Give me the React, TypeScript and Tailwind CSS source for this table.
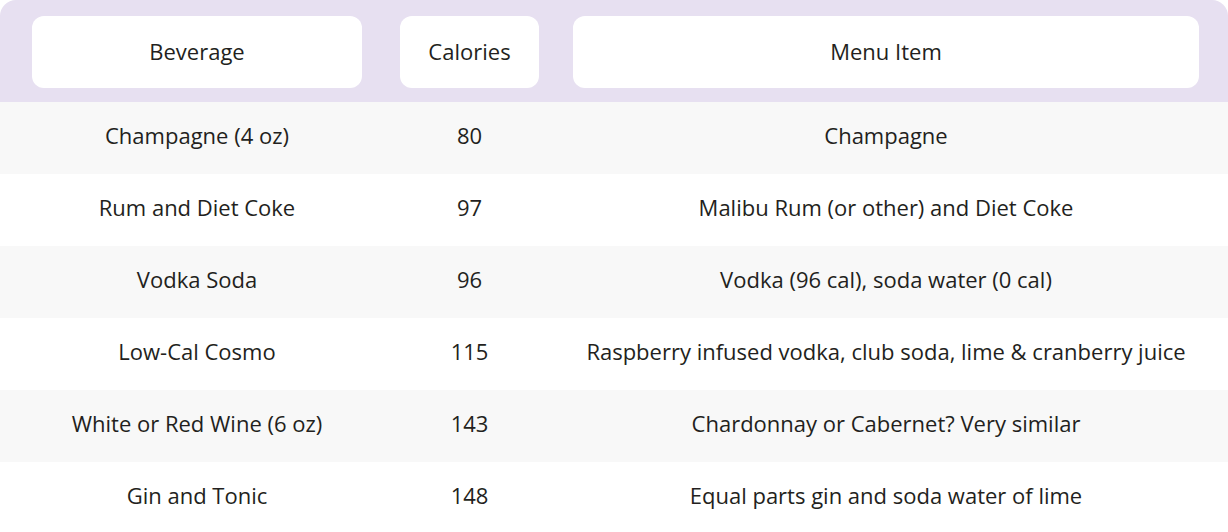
const ROWS = [
  { beverage: "Champagne (4 oz)", calories: "80", item: "Champagne" },
  { beverage: "Rum and Diet Coke", calories: "97", item: "Malibu Rum (or other) and Diet Coke" },
  { beverage: "Vodka Soda", calories: "96", item: "Vodka (96 cal), soda water (0 cal)" },
  { beverage: "Low-Cal Cosmo", calories: "115", item: "Raspberry infused vodka, club soda, lime & cranberry juice" },
  { beverage: "White or Red Wine (6 oz)", calories: "143", item: "Chardonnay or Cabernet? Very similar" },
  { beverage: "Gin and Tonic", calories: "148", item: "Equal parts gin and soda water of lime" },
]

export default function App() {
  return (
    <div className="w-[1228px] h-[532px] overflow-hidden bg-white text-[#231f20] font-['Open_Sans',sans-serif] text-[22px]">
      {/* header band */}
      <div className="bg-[#e7e0f1] rounded-t-[16px] flex pl-[32px] pt-[16px] pb-[14px]">
        <div className="w-[330px] h-[72px] bg-white rounded-[12px] flex items-center justify-center pb-[2px]">Beverage</div>
        <div className="ml-[38px] w-[139px] h-[72px] bg-white rounded-[12px] flex items-center justify-center pb-[2px]">Calories</div>
        <div className="ml-[34px] w-[626px] h-[72px] bg-white rounded-[12px] flex items-center justify-center pb-[2px]">Menu Item</div>
      </div>

      {ROWS.map((row, idx) => (
        <div key={idx} className={idx % 2 === 0 ? "flex pl-[32px] h-[72px] pb-[5px] items-center bg-[#f8f8f8]" : "flex pl-[32px] h-[72px] pb-[5px] items-center bg-white"}>
          <div className="w-[330px] text-center whitespace-nowrap">{row.beverage}</div>
          <div className="ml-[38px] w-[139px] text-center">{row.calories}</div>
          <div className="ml-[34px] w-[626px] text-center whitespace-nowrap">{row.item}</div>
        </div>
      ))}
    </div>
  )
}
